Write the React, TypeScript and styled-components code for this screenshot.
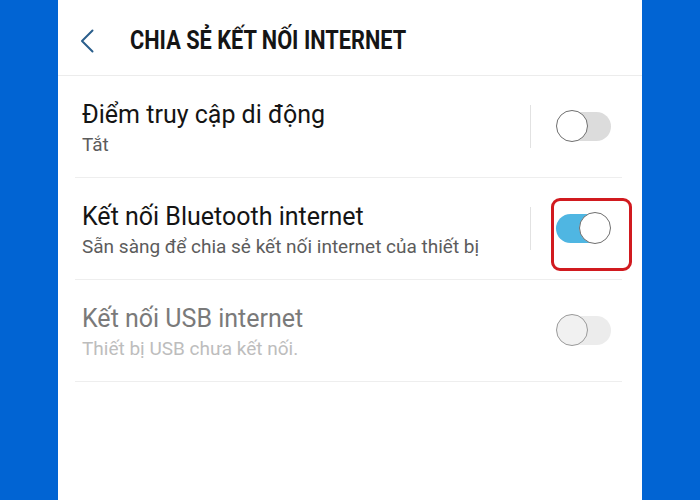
import React from "react";
import styled, { createGlobalStyle } from "styled-components";

const Global = createGlobalStyle`
  html, body { margin: 0; padding: 0; }
  body { background: #0164d3; font-family: Roboto, "Noto Sans", sans-serif; }
`;

const Page = styled.div`
  display: flex;
  justify-content: center;
  width: 700px;
  height: 500px;
  overflow: hidden;
`;

const Panel = styled.div`
  width: 584px;
  height: 500px;
  background: #ffffff;
  display: flex;
  flex-direction: column;
`;

const Header = styled.div`
  display: flex;
  align-items: center;
  padding: 6px 0 0 22px;
  border-bottom: 1px solid #ececec;
  box-sizing: border-box;
  height: 76px;
`;

const Back = styled.svg`
  width: 14px;
  height: 24px;
  margin-right: 36px;
`;

const Title = styled.h1`
  margin: 0;
  font-family: Roboto, "Liberation Sans", sans-serif;
  font-weight: 700;
  font-size: 25px;
  color: #151515;
  transform: scaleX(0.87);
  transform-origin: left center;
  white-space: nowrap;
`;

const Row = styled.div`
  display: flex;
  align-items: center;
  height: 102px;
  box-sizing: border-box;
  margin: 0 20px 0 17px;
  padding: 0 11px 0 7px;
  border-bottom: 1px solid #eeeeee;
`;

const Texts = styled.div`
  flex: 1;
  display: flex;
  flex-direction: column;
  gap: 4px;
  padding-top: 5px;
`;

const Label = styled.div<{ $disabled?: boolean }>`
  font-size: 25px;
  line-height: 28px;
  color: ${(p) => (p.$disabled ? "#7a7a7a" : "#141414")};
`;

const Sub = styled.div<{ $disabled?: boolean }>`
  font-size: 19px;
  line-height: 24px;
  color: ${(p) => (p.$disabled ? "#bdbdbd" : "#5c5c5c")};
`;

const Divider = styled.div<{ $hidden?: boolean }>`
  width: 1px;
  height: 43px;
  background: ${(p) => (p.$hidden ? "transparent" : "#e2e2e2")};
  margin-right: 25px;
`;

const SwitchWrap = styled.div<{ $highlight?: boolean }>`
  position: relative;
  width: 55px;
  height: 33px;
  &::after {
    content: "";
    display: ${(p) => (p.$highlight ? "block" : "none")};
    position: absolute;
    left: -5px;
    top: -14px;
    width: 81px;
    height: 73px;
    box-sizing: border-box;
    border: 3px solid #d11a1f;
    border-radius: 9px;
  }
`;

const Track = styled.div<{ $on?: boolean; $disabled?: boolean }>`
  position: absolute;
  top: 2px;
  bottom: 2px;
  left: ${(p) => (p.$on ? "0" : "8px")};
  right: ${(p) => (p.$on ? "8px" : "0")};
  border-radius: 15px;
  background: ${(p) => (p.$on ? "#4fb6e2" : p.$disabled ? "#ececec" : "#dcdcdc")};
`;

const Thumb = styled.div<{ $on?: boolean; $disabled?: boolean }>`
  position: absolute;
  top: 0;
  left: ${(p) => (p.$on ? "23px" : "0")};
  width: 32px;
  height: 32px;
  box-sizing: border-box;
  border-radius: 50%;
  border: 1px solid ${(p) => (p.$disabled ? "#9a9a9a" : "#6f6f6f")};
  background: ${(p) => (p.$disabled ? "#f1f1f1" : "#ffffff")};
`;

type Item = {
  label: string;
  sub: string;
  on?: boolean;
  disabled?: boolean;
  highlight?: boolean;
  divider?: boolean;
};

const items: Item[] = [
  { label: "Điểm truy cập di động", sub: "Tắt", divider: true },
  {
    label: "Kết nối Bluetooth internet",
    sub: "Sẵn sàng để chia sẻ kết nối internet của thiết bị",
    on: true,
    highlight: true,
    divider: true,
  },
  { label: "Kết nối USB internet", sub: "Thiết bị USB chưa kết nối.", disabled: true },
];

export default function App() {
  return (
    <Page>
      <Global />
      <Panel>
        <Header>
          <Back viewBox="0 0 14 24">
            <path d="M12.5 1.5 L2 12 L12.5 22.5" fill="none" stroke="#2b5f8c" strokeWidth="2" strokeLinecap="round" strokeLinejoin="round" />
          </Back>
          <Title>CHIA SẺ KẾT NỐI INTERNET</Title>
        </Header>
        {items.map((it) => (
          <Row key={it.label}>
            <Texts>
              <Label $disabled={it.disabled}>{it.label}</Label>
              <Sub $disabled={it.disabled}>{it.sub}</Sub>
            </Texts>
            <Divider $hidden={!it.divider} />
            <SwitchWrap $highlight={it.highlight}>
              <Track $on={it.on} $disabled={it.disabled} />
              <Thumb $on={it.on} $disabled={it.disabled} />
            </SwitchWrap>
          </Row>
        ))}
      </Panel>
    </Page>
  );
}
